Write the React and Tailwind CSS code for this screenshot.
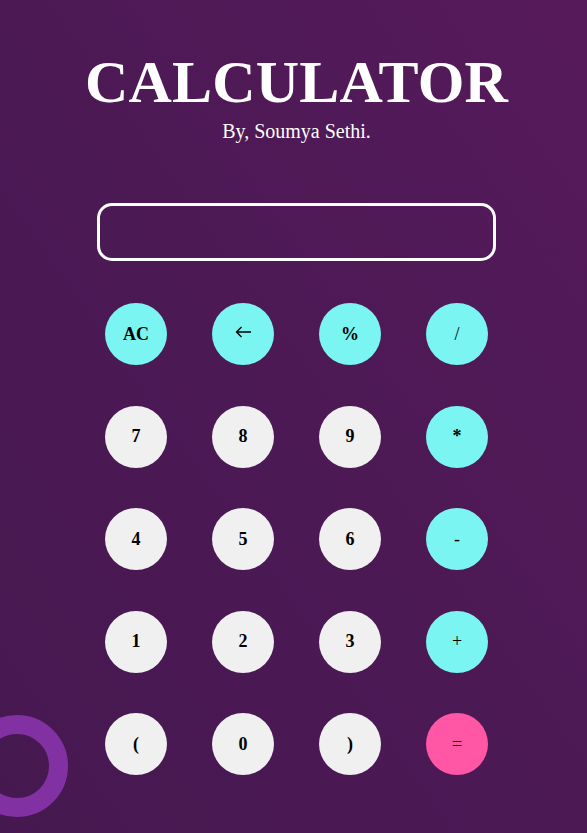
const KEYS = [
  { label: "AC", kind: "op", bold: true },
  { label: "back", kind: "op" },
  { label: "%", kind: "op", bold: true },
  { label: "/", kind: "op" },
  { label: "7", kind: "num" },
  { label: "8", kind: "num" },
  { label: "9", kind: "num" },
  { label: "*", kind: "op", bold: true },
  { label: "4", kind: "num" },
  { label: "5", kind: "num" },
  { label: "6", kind: "num" },
  { label: "-", kind: "op" },
  { label: "1", kind: "num" },
  { label: "2", kind: "num" },
  { label: "3", kind: "num" },
  { label: "+", kind: "op" },
  { label: "(", kind: "num" },
  { label: "0", kind: "num" },
  { label: ")", kind: "num" },
  { label: "=", kind: "eq" },
];

const KIND_BG = {
  op: "bg-[#7af5f2]",
  num: "bg-[#f0f0f0]",
  eq: "bg-[#ff56a6]",
};

function BackArrow() {
  return (
    <svg width="17" height="12" viewBox="0 0 17 12" fill="none" stroke="black" strokeWidth="1.4" className="-mt-[4px]">
      <path d="M16 6H1.5M6.5 1L1.5 6l5 5" />
    </svg>
  );
}

export default function App() {
  return (
    <div className="relative min-h-[833px] overflow-hidden bg-gradient-to-tr from-[#461850] via-[#4c1955] to-[#561a5a] font-['Liberation_Serif','Times_New_Roman',serif] text-black">
      {/* decorative ring */}
      <div className="absolute left-[-34px] top-[715px] h-[102px] w-[102px] rounded-full border-[19px] border-[#8231a3]" />

      <div className="flex flex-col items-center pl-[6px] pt-[52px]">
        <h1 className="text-[60px] font-bold leading-none tracking-[0.2px] text-white">
          CALCULATOR
        </h1>
        <p className="mt-[7px] text-[20px] leading-tight text-white">By, Soumya Sethi.</p>

        <div className="mt-[59px] h-[58px] w-[399px] rounded-[15px] border-[3px] border-white" />

        <div className="mt-[42px] grid grid-cols-4 gap-x-[45px] gap-y-[40.5px]">
          {KEYS.map((k) => (
            <button
              key={k.label}
              aria-label={k.label === "back" ? "←" : undefined}
              className={`flex h-[62px] w-[62px] items-center justify-center rounded-full text-[18px] ${
                KIND_BG[k.kind]
              } ${k.kind === "num" || k.bold ? "font-bold" : "font-normal"}`}
            >
              {k.label === "back" ? <BackArrow /> : k.label}
            </button>
          ))}
        </div>
      </div>
    </div>
  );
}
